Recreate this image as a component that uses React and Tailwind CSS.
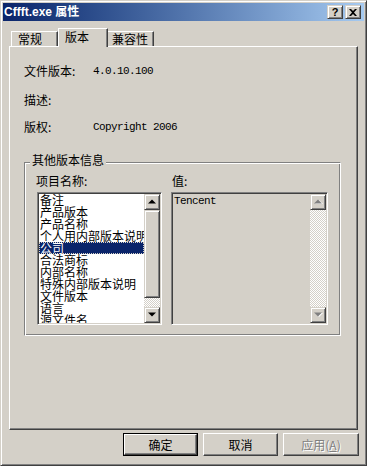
import React from "react";

const CJK = "font-['SimSun','Noto_Sans_CJK_SC',sans-serif]";
const MONO = "font-['Liberation_Mono',monospace] text-[11px] tracking-[-0.6px]";

const raisedFrame =
  "border border-t-[#d4d0c8] border-l-[#d4d0c8] border-r-[#404040] border-b-[#404040] shadow-[inset_1px_1px_#ffffff,inset_-1px_-1px_#808080]";
const checker =
  "bg-[image:repeating-conic-gradient(#ffffff_0%_25%,#d4d0c8_0%_50%)] bg-[length:2px_2px]";

function Arrow({ up, disabled }) {
  const d = up ? "M4 0 L8 4 L0 4 Z" : "M0 0 L8 0 L4 4 Z";
  return (
    <svg width="9" height="6" viewBox="0 0 9 6" className="block">
      {disabled && <path d={d} transform="translate(1 1)" fill="#ffffff" />}
      <path d={d} transform="translate(0 0.5)" fill={disabled ? "#808080" : "#000000"} />
    </svg>
  );
}

function ScrollBtn({ up, disabled }) {
  return (
    <div className={"w-[16px] h-[16px] shrink-0 flex items-center justify-center bg-[#d4d0c8] " + raisedFrame}>
      <Arrow up={up} disabled={disabled} />
    </div>
  );
}

function Sunken({ className, children }) {
  return (
    <div
      className={
        "border border-t-[#808080] border-l-[#808080] border-r-white border-b-white shadow-[inset_1px_1px_#404040,inset_-1px_-1px_#d4d0c8] p-px " +
        className
      }
    >
      {children}
    </div>
  );
}

const items = [
  "备注",
  "产品版本",
  "产品名称",
  "个人用内部版本说明",
  "公司",
  "合法商标",
  "内部名称",
  "特殊内部版本说明",
  "文件版本",
  "语言",
  "源文件名",
];

function PushButton({ children, isDefault, disabled }) {
  const inner = (
    <div
      className={
        "w-full h-full flex items-center justify-center border border-t-white border-l-white border-r-[#404040] border-b-[#404040] shadow-[inset_-1px_-1px_#808080] text-[12px] leading-[12px] " +
        CJK
      }
    >
      {children}
    </div>
  );
  if (isDefault) {
    return <div className="w-[75px] h-[23px] border border-black">{inner}</div>;
  }
  return <div className={"h-[23px] " + (disabled ? "w-[76px]" : "w-[75px]")}>{inner}</div>;
}

export default function App() {
  return (
    <div className="w-[367px] h-[466px] bg-[#d4d0c8] text-black overflow-hidden">
      <div className={"w-full h-full p-[2px] bg-[#d4d0c8] " + raisedFrame}>
        {/* Title bar */}
        <div className="h-[18px] flex items-center pl-[1px] pr-[3px] bg-linear-to-r from-[#0a246a] to-[#a6caf0]">
          <div className="text-white font-bold text-[12px] leading-[14px] font-['Liberation_Sans','Noto_Sans_CJK_SC',sans-serif] whitespace-nowrap">
            Cffft.exe 属性
          </div>
          <div className="flex-1" />
          <div className="flex gap-[2px]">
            <div className={"w-[16px] h-[14px] bg-[#d4d0c8] flex items-center justify-center " + raisedFrame}>
              <span className="text-[11px] leading-[11px] font-bold font-['Liberation_Sans',sans-serif]">?</span>
            </div>
            <div className={"w-[16px] h-[14px] bg-[#d4d0c8] flex items-center justify-center " + raisedFrame}>
              <svg width="8" height="7" viewBox="0 0 8 7" className="block">
                <path d="M0 0 L2 0 L4 2 L6 0 L8 0 L5 3.5 L8 7 L6 7 L4 5 L2 7 L0 7 L3 3.5 Z" fill="#000" />
              </svg>
            </div>
          </div>
        </div>

        {/* Tabs */}
        <div className={"mt-[7px] h-[18px] flex items-end pl-[8px] text-[12px] leading-[12px] " + CJK}>
          <div className="w-[47px] h-[15px] flex items-center pl-[6px] border-t border-l border-white border-r border-r-[#404040] shadow-[inset_-1px_0_#808080]">
            常规
          </div>
          <div className="relative z-10 -mb-px w-[50px] h-[19px] pb-[2px] flex items-center pl-[6px] bg-[#d4d0c8] border-t border-l border-white border-r border-r-[#404040] shadow-[inset_-1px_0_#808080]">
            版本
          </div>
          <div className="w-[46px] h-[15px] flex items-center pl-[4px] border-t border-white border-r border-r-[#404040] shadow-[inset_-1px_0_#808080]">
            兼容性
          </div>
        </div>

        {/* Panel */}
        <div className="ml-[6px] w-[349px] h-[384px] border border-t-white border-l-white border-r-[#404040] border-b-[#404040] shadow-[inset_-1px_-1px_#808080] pl-[14px] pt-[18px]">
          <div className={"flex items-center h-[12px] text-[12px] leading-[12px] " + CJK}>
            <div className="w-[69px]">文件版本:</div>
            <div className={MONO}>4.0.10.100</div>
          </div>
          <div className={"mt-[17px] flex items-center h-[12px] text-[12px] leading-[12px] " + CJK}>
            <div className="w-[69px]">描述:</div>
          </div>
          <div className={"mt-[15px] flex items-center h-[12px] text-[12px] leading-[12px] " + CJK}>
            <div className="w-[69px]">版权:</div>
            <div className={MONO}>Copyright 2006</div>
          </div>

          {/* Group box */}
          <div className="relative mt-[29px] w-[317px] h-[174px] border border-t-[#808080] border-l-[#808080] border-r-white border-b-white shadow-[inset_1px_1px_#ffffff,inset_-1px_-1px_#808080] pl-[12px] pt-[12px]">
            <div className={"absolute left-[5px] top-[-9px] px-[2px] bg-[#d4d0c8] text-[12px] leading-[12px] " + CJK}>
              其他版本信息
            </div>
            <div className={"flex gap-[9px] text-[12px] leading-[12px] " + CJK}>
              {/* Left column */}
              <div className="w-[125px]">
                <div className="h-[12px] -ml-px">项目名称:</div>
                <Sunken className="mt-[5px] h-[133px] bg-white flex">
                  <div className="flex-1 overflow-hidden">
                    {items.map((t, i) => (
                      <div
                        key={t}
                        className={
                          "h-[12px] leading-[12px] whitespace-nowrap pl-px " +
                          (i === 4
                            ? "bg-[#0a246a] text-white outline outline-1 outline-dotted outline-[#d4d0c8] -outline-offset-1"
                            : "")
                        }
                      >
                        {t}
                      </div>
                    ))}
                  </div>
                  <div className="w-[16px] flex flex-col">
                    <ScrollBtn up />
                    <div className={"h-[88px] bg-[#d4d0c8] " + raisedFrame} />
                    <div className={"flex-1 " + checker} />
                    <ScrollBtn />
                  </div>
                </Sunken>
              </div>

              {/* Right column */}
              <div className="w-[157px]">
                <div className="h-[12px] pl-px">值:</div>
                <Sunken className="mt-[5px] h-[133px] bg-[#d4d0c8] flex">
                  <div className={"flex-1 pl-px pt-[1px] leading-[12px] " + MONO}>Tencent</div>
                  <div className="w-[16px] flex flex-col">
                    <ScrollBtn up disabled />
                    <div className={"flex-1 " + checker} />
                    <ScrollBtn disabled />
                  </div>
                </Sunken>
              </div>
            </div>
          </div>
        </div>

        {/* Buttons */}
        <div className="mt-[3px] flex justify-end gap-[5px] pr-[5px]">
          <PushButton isDefault>确定</PushButton>
          <PushButton>取消</PushButton>
          <PushButton disabled>
            <span className="text-[#808080] [text-shadow:1px_1px_#ffffff]">
              应用(<span className="underline">A</span>)
            </span>
          </PushButton>
        </div>
      </div>
    </div>
  );
}
